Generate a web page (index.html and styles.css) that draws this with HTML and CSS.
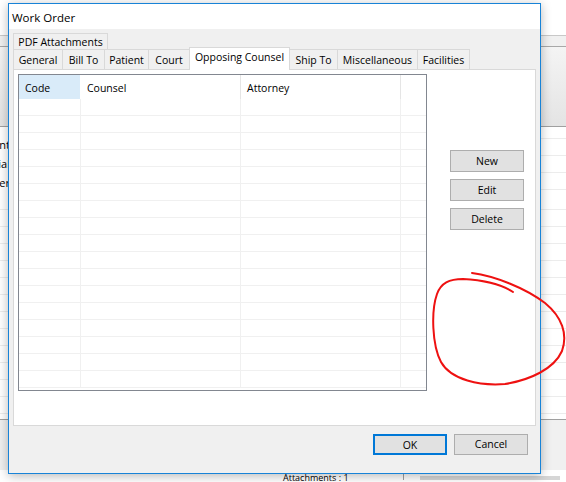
FILE: index.html
```html
<!DOCTYPE html>
<html>
<head>
<meta charset="utf-8">
<title>Work Order</title>
<link rel="stylesheet" href="styles.css">
</head>
<body>
<div class="app">
  <div class="menu">
    <span class="mi">Inquiry</span><span class="mi">View</span><span class="mi">Web</span><span class="mi">Purchred</span><span class="mi">Rebuild</span><span class="mi">Options</span><span class="mi">Help</span>
  </div>
  <div class="band band-top"></div>
  <div class="band band-strip"></div>
  <div class="band band-tool"></div>
  <div class="list">
    <div class="lbl">Patient</div>
    <div class="lbl">Special</div>
    <div class="lbl">Other</div>
  </div>
  <div class="band band-foot"></div>
  <div class="status">
    <span class="foot-text">Patient Search Name Entrance</span>
    <span class="attach">Attachments : 1</span>
    <span class="vsep"></span>
    <span class="graybox"></span>
  </div>
</div>

<div class="dialog">
  <div class="titlebar">Work Order</div>
  <div class="dlg-body">
    <div class="tabs1">
      <div class="tab tab-pdf">PDF Attachments</div>
    </div>
    <div class="tabs2">
      <div class="tab tab-general">General</div>
      <div class="tab tab-bill">Bill To</div>
      <div class="tab tab-patient">Patient</div>
      <div class="tab tab-court">Court</div>
      <div class="tab tab-opp selected">Opposing Counsel</div>
      <div class="tab tab-ship">Ship To</div>
      <div class="tab tab-misc">Miscellaneous</div>
      <div class="tab tab-fac">Facilities</div>
    </div>
    <div class="panel">
      <div class="grid">
        <div class="hdr">
          <div class="c c1 hsel">Code</div>
          <div class="c c2">Counsel</div>
          <div class="c c3">Attorney</div>
          <div class="c c4"></div>
        </div>
        <div class="rows">
          <div class="row"><i class="c c1"></i><i class="c c2"></i><i class="c c3"></i><i class="c c4"></i></div>
          <div class="row"><i class="c c1"></i><i class="c c2"></i><i class="c c3"></i><i class="c c4"></i></div>
          <div class="row"><i class="c c1"></i><i class="c c2"></i><i class="c c3"></i><i class="c c4"></i></div>
          <div class="row"><i class="c c1"></i><i class="c c2"></i><i class="c c3"></i><i class="c c4"></i></div>
          <div class="row"><i class="c c1"></i><i class="c c2"></i><i class="c c3"></i><i class="c c4"></i></div>
          <div class="row"><i class="c c1"></i><i class="c c2"></i><i class="c c3"></i><i class="c c4"></i></div>
          <div class="row"><i class="c c1"></i><i class="c c2"></i><i class="c c3"></i><i class="c c4"></i></div>
          <div class="row"><i class="c c1"></i><i class="c c2"></i><i class="c c3"></i><i class="c c4"></i></div>
          <div class="row"><i class="c c1"></i><i class="c c2"></i><i class="c c3"></i><i class="c c4"></i></div>
          <div class="row"><i class="c c1"></i><i class="c c2"></i><i class="c c3"></i><i class="c c4"></i></div>
          <div class="row"><i class="c c1"></i><i class="c c2"></i><i class="c c3"></i><i class="c c4"></i></div>
          <div class="row"><i class="c c1"></i><i class="c c2"></i><i class="c c3"></i><i class="c c4"></i></div>
          <div class="row"><i class="c c1"></i><i class="c c2"></i><i class="c c3"></i><i class="c c4"></i></div>
          <div class="row"><i class="c c1"></i><i class="c c2"></i><i class="c c3"></i><i class="c c4"></i></div>
          <div class="row"><i class="c c1"></i><i class="c c2"></i><i class="c c3"></i><i class="c c4"></i></div>
          <div class="row"><i class="c c1"></i><i class="c c2"></i><i class="c c3"></i><i class="c c4"></i></div>
          <div class="row"><i class="c c1"></i><i class="c c2"></i><i class="c c3"></i><i class="c c4"></i></div>
        </div>
      </div>
      <div class="side">
        <button class="btn">New</button>
        <button class="btn">Edit</button>
        <button class="btn">Delete</button>
      </div>
    </div>
    <div class="dlg-footer">
      <button class="btn btn-foot btn-ok">OK</button>
      <button class="btn btn-foot">Cancel</button>
    </div>
  </div>
</div>

<svg class="annot" width="566" height="482" viewBox="0 0 566 482">
  <path d="M472,273 C495,276 525,288 545,303 C562,317 568,334 562,351 C554,369 530,380 505,384 C480,386 451,380 441,362 C432,345 431,311 437,294 C441,283 449,279 463,279 C481,280 501,284 513,292" fill="none" stroke="#ee1111" stroke-width="2" stroke-linecap="round"/>
</svg>
</body>
</html>
```

FILE: styles.css
```css
html, body {
  margin: 0;
  padding: 0;
}
body {
  width: 566px;
  height: 482px;
  overflow: hidden;
  position: relative;
  background: #ffffff;
  font-family: "Open Sans", "Noto Sans", sans-serif;
  font-size: 10.5px;
  color: #000;
}

/* ---------- background application ---------- */
.app {
  display: flex;
  flex-direction: column;
  height: 482px;
}
.menu {
  height: 3px;
  overflow: hidden;
  display: flex;
  gap: 21px;
  padding-left: 5px;
  background: #fff;
}
.mi {
  display: block;
  font-size: 11px;
  line-height: 12px;
  margin-top: -10px;
}
.band {
  flex: none;
}
.band-top {
  height: 35px;
  background: #fff;
  border-bottom: 1px solid #c8c8c8;
}
.band-strip {
  height: 10px;
  background: #f0f0f0;
  border-bottom: 1px solid #a8a8a8;
}
.band-tool {
  height: 79px;
  background: linear-gradient(#f4f4f4, #e4e4e4);
  border-bottom: 1px solid #a0a0a0;
}
.list {
  flex: none;
  box-sizing: border-box;
  height: 293px;
  border-bottom: 1px solid #a0a0a0;
  background: #fff repeating-linear-gradient(#fff 0 16px, #ececec 16px 17px);
  background-position: 0 66px;
  padding-top: 8px;
}
.lbl {
  width: 10px;
  overflow: hidden;
  direction: rtl;
  white-space: nowrap;
  font-size: 11px;
  line-height: 19px;
  background: #fff;
}
.band-foot {
  height: 50px;
  background: #f0f0f0;
}
.status {
  flex: 1;
  display: flex;
  align-items: flex-start;
  background: #fff;
  font-size: 11px;
  white-space: nowrap;
}
.foot-text {
  margin-left: 38px;
  width: 245px;
  line-height: 12px;
  margin-top: -8px;
  font-size: 9px;
  color: #222;
}
.attach {
  margin-top: 2px;
  line-height: 12px;
  width: 120px;
  font-size: 9px;
}
.vsep {
  width: 1px;
  height: 10px;
  background: #a0a0a0;
}
.graybox {
  margin-left: 16px;
  margin-top: 6px;
  width: 140px;
  height: 4px;
  background: #d6d6d6;
}

/* ---------- dialog window ---------- */
.dialog {
  position: absolute;
  left: 8px;
  top: 3px;
  width: 533px;
  height: 471px;
  box-sizing: border-box;
  border: 1px solid #1883d7;
  background: #f0f0f0;
  box-shadow: 0 2px 10px rgba(0, 0, 0, 0.28);
  display: flex;
  flex-direction: column;
}
.titlebar {
  height: 25px;
  flex: none;
  background: #fff;
  padding-left: 3px;
  padding-top: 1px;
  box-sizing: border-box;
  display: flex;
  align-items: center;
  font-size: 11.5px;
}
.dlg-body {
  flex: 1;
  padding: 4px 4px 0 4px;
  display: flex;
  flex-direction: column;
}

/* tabs */
.tabs1, .tabs2 {
  display: flex;
  flex: none;
}
.tabs1 {
  height: 16px;
}
.tabs2 {
  height: 20px;
}
.tab {
  box-sizing: border-box;
  border: 1px solid #d9d9d9;
  border-bottom: 0;
  background: #f0f0f0;
  text-align: center;
  white-space: nowrap;
  margin-left: -1px;
}
.tabs1 .tab {
  margin-left: 0;
  height: 16px;
  line-height: 16px;
}
.tabs2 .tab {
  height: 20px;
  line-height: 20px;
}
.tabs2 .tab:first-child {
  margin-left: 0;
}
.tab-pdf { width: 95px; }
.tab-general { width: 50px; }
.tab-bill { width: 43px; }
.tab-patient { width: 45px; }
.tab-court { width: 42px; }
.tab-opp { width: 101px; }
.tab-ship { width: 49px; }
.tab-misc { width: 81px; }
.tab-fac { width: 53px; }
.tabs2 .tab.selected {
  background: #fff;
  height: 23px;
  margin-top: -2px;
  margin-bottom: -1px;
  line-height: 19px;
  position: relative;
  z-index: 2;
}

/* tab page */
.panel {
  flex: none;
  height: 357px;
  box-sizing: border-box;
  border: 1px solid #d9d9d9;
  background: #fff;
  padding: 4px 0 0 4px;
  display: flex;
  align-items: flex-start;
}
.grid {
  width: 409px;
  height: 317px;
  box-sizing: border-box;
  border: 1px solid #828790;
  background: #fff;
}
.hdr {
  display: flex;
  height: 24px;
}
.hdr .c {
  line-height: 24px;
  padding-left: 6px;
  padding-top: 1px;
  border-right: 1px solid #e5e5e5;
}
.hdr .c4 {
  border-right: 0;
}
.hdr .hsel {
  background: #d9ebf9;
  border-right-color: #fff;
}
.row {
  display: flex;
  height: 17px;
  box-sizing: border-box;
  border-bottom: 1px solid #f0f0f0;
}
.c {
  display: block;
  box-sizing: border-box;
  height: 100%;
  border-right: 1px solid #f0f0f0;
}
.c1 { width: 62px; }
.c2 { width: 160px; }
.c3 { width: 160px; }
.c4 { flex: 1; border-right: 0; }

.side {
  margin-left: 23px;
  padding-top: 76px;
  display: flex;
  flex-direction: column;
  gap: 7px;
}
.btn {
  width: 74px;
  height: 22px;
  box-sizing: border-box;
  border: 1px solid #adadad;
  background: #e1e1e1;
  font-family: "Open Sans", "Noto Sans", sans-serif;
  font-size: 10.5px;
  color: #000;
  padding: 0;
  margin: 0;
  line-height: 19px;
}
.dlg-footer {
  display: flex;
  justify-content: flex-end;
  gap: 7px;
  padding: 8px 8px 0 0;
}
.btn-foot {
  height: 21px;
}
.btn-ok {
  border: 2px solid #0078d7;
  line-height: 16px;
}

/* annotation */
.annot {
  position: absolute;
  left: 0;
  top: 0;
  pointer-events: none;
}
```
